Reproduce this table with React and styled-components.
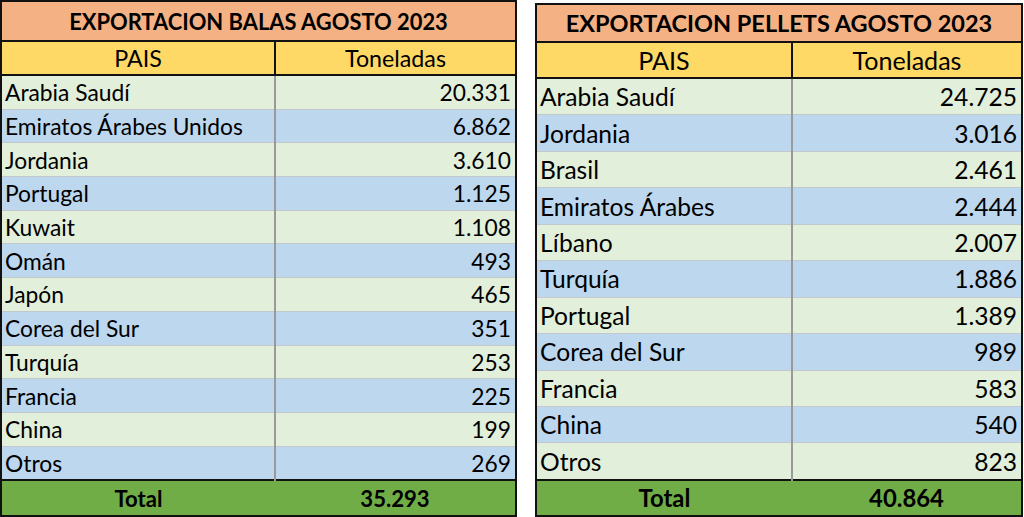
import React from 'react';
import styled, { createGlobalStyle } from 'styled-components';

const GlobalStyle = createGlobalStyle`
  html, body {
    margin: 0;
    padding: 0;
    background: #ffffff;
  }
  body {
    font-family: Lato, "Liberation Sans", sans-serif;
    color: #000;
  }
`;

const Page = styled.div`
  display: flex;
  align-items: flex-start;
  gap: 18px;
  width: 1024px;
  height: 517px;
  overflow: hidden;
`;

const Table = styled.table`
  border-collapse: collapse;
  border: 2px solid #111;
  width: ${props => props.$width}px;
  margin-top: ${props => props.$top || 0}px;
  table-layout: fixed;
  font-size: ${props => props.$fs}px;
`;

const TitleCell = styled.th`
  background: #f4b183;
  height: ${props => props.$h}px;
  padding: 0;
  font-size: ${props => props.$fs}px;
  font-weight: 700;
  text-align: center;
  border-bottom: 2px solid #111;
`;

const HeadCell = styled.th`
  background: #ffd966;
  height: ${props => props.$h}px;
  padding: 0;
  font-size: 1.02em;
  font-weight: 400;
  text-align: center;
  border-bottom: 2px solid #111;
  border-right: 2px solid #111;

  &:last-child {
    border-right: none;
  }
`;

const Row = styled.tr`
  background: ${props => (props.$alt ? '#bdd7ee' : '#e2efda')};
`;

const Cell = styled.td`
  height: ${props => props.$h}px;
  padding: 0 4px 0 3px;
  font-size: 1em;
  text-align: ${props => (props.$num ? 'right' : 'left')};
  border-top: 1px solid #c3c8cc;
  border-right: 2px solid #9a9a9a;
  white-space: nowrap;

  &:last-child {
    border-right: none;
  }
`;

const TotalRow = styled.tr`
  background: #70ad47;
`;

const TotalCell = styled.td`
  height: ${props => props.$h}px;
  padding: 0;
  font-size: 0.97em;
  font-weight: 700;
  text-align: center;
  border-top: 2px solid #111;
`;

const balas = [
  ['Arabia Saudí', '20.331'],
  ['Emiratos Árabes Unidos', '6.862'],
  ['Jordania', '3.610'],
  ['Portugal', '1.125'],
  ['Kuwait', '1.108'],
  ['Omán', '493'],
  ['Japón', '465'],
  ['Corea del Sur', '351'],
  ['Turquía', '253'],
  ['Francia', '225'],
  ['China', '199'],
  ['Otros', '269'],
];

const pellets = [
  ['Arabia Saudí', '24.725'],
  ['Jordania', '3.016'],
  ['Brasil', '2.461'],
  ['Emiratos Árabes', '2.444'],
  ['Líbano', '2.007'],
  ['Turquía', '1.886'],
  ['Portugal', '1.389'],
  ['Corea del Sur', '989'],
  ['Francia', '583'],
  ['China', '540'],
  ['Otros', '823'],
];

function ExportTable({ title, rows, total, width, colWidth, top, fs, titleFs, titleH, headH, rowH, totalH }) {
  return (
    <Table $width={width} $top={top} $fs={fs}>
      <colgroup>
        <col style={{ width: colWidth }} />
        <col />
      </colgroup>
      <thead>
        <tr>
          <TitleCell colSpan={2} $h={titleH} $fs={titleFs}>{title}</TitleCell>
        </tr>
        <tr>
          <HeadCell $h={headH}>PAIS</HeadCell>
          <HeadCell $h={headH}>Toneladas</HeadCell>
        </tr>
      </thead>
      <tbody>
        {rows.map(([pais, ton], i) => (
          <Row key={pais} $alt={i % 2 === 1}>
            <Cell $h={rowH}>{pais}</Cell>
            <Cell $h={rowH} $num>{ton}</Cell>
          </Row>
        ))}
        <TotalRow>
          <TotalCell $h={totalH}>Total</TotalCell>
          <TotalCell $h={totalH}>{total}</TotalCell>
        </TotalRow>
      </tbody>
    </Table>
  );
}

export default function App() {
  return (
    <>
      <GlobalStyle />
      <Page>
        <ExportTable
          title="EXPORTACION BALAS AGOSTO 2023"
          rows={balas}
          total="35.293"
          width={517}
          colWidth={274}
          fs={22.8}
          titleFs={21.9}
          titleH={38}
          headH={32}
          rowH={32.7}
          totalH={34}
        />
        <ExportTable
          title="EXPORTACION PELLETS AGOSTO 2023"
          rows={pellets}
          total="40.864"
          width={488}
          colWidth={256}
          top={3}
          fs={24.6}
          titleFs={23.5}
          titleH={36}
          headH={34}
          rowH={35.45}
          totalH={34}
        />
      </Page>
    </>
  );
}
